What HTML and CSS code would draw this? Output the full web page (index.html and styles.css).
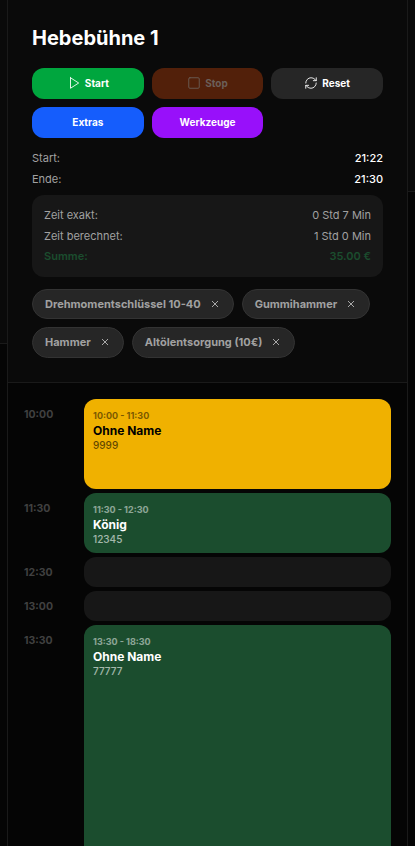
FILE: index.html
```html
<!DOCTYPE html>
<html lang="de">
<head>
  <meta charset="UTF-8">
  <title>Hebebühne 1</title>
  <link rel="stylesheet" href="styles.css">
</head>
<body>
  <!-- rows of the page behind the panel -->
  <div class="edge edge-left"></div>
  <div class="edge edge-right"></div>

  <div class="lift-panel">
    <section class="controls">
      <h1>Hebebühne 1</h1>

      <div class="btn-grid">
        <button class="btn btn-start">
          <svg class="btn-icon" viewBox="0 0 24 24"><polygon points="6 3 20 12 6 21 6 3" /></svg>
          Start
        </button>
        <button class="btn btn-stop">
          <svg class="btn-icon" viewBox="0 0 24 24"><rect x="3" y="3" width="18" height="18" rx="2" /></svg>
          Stop
        </button>
        <button class="btn btn-reset">
          <svg class="btn-icon" viewBox="0 0 24 24">
            <path d="M3 12a9 9 0 0 1 9-9 9.75 9.75 0 0 1 6.74 2.74L21 8" />
            <path d="M21 3v5h-5" />
            <path d="M21 12a9 9 0 0 1-9 9 9.75 9.75 0 0 1-6.74-2.74L3 16" />
            <path d="M8 16H3v5" />
          </svg>
          Reset
        </button>
        <button class="btn btn-extras">Extras</button>
        <button class="btn btn-tools">Werkzeuge</button>
      </div>

      <div class="time-row"><span>Start:</span><b>21:22</b></div>
      <div class="time-row"><span>Ende:</span><b>21:30</b></div>

      <div class="summary">
        <div class="summary-row"><span>Zeit exakt:</span><span>0 Std 7 Min</span></div>
        <div class="summary-row"><span>Zeit berechnet:</span><span>1 Std 0 Min</span></div>
        <div class="summary-row summary-total"><span>Summe:</span><span>35.00 €</span></div>
      </div>

      <div class="tags">
        <span class="tag">Drehmomentschlüssel 10-40 <svg class="tag-x" viewBox="0 0 24 24"><path d="M18 6 6 18M6 6l12 12" /></svg></span>
        <span class="tag">Gummihammer <svg class="tag-x" viewBox="0 0 24 24"><path d="M18 6 6 18M6 6l12 12" /></svg></span>
        <span class="tag">Hammer <svg class="tag-x" viewBox="0 0 24 24"><path d="M18 6 6 18M6 6l12 12" /></svg></span>
        <span class="tag">Altölentsorgung (10€) <svg class="tag-x" viewBox="0 0 24 24"><path d="M18 6 6 18M6 6l12 12" /></svg></span>
      </div>
    </section>

    <section class="schedule">
      <div class="slot">
        <div class="slot-time">10:00</div>
        <div class="booking booking-yellow h-90">
          <div class="booking-time">10:00 - 11:30</div>
          <div class="booking-name">Ohne Name</div>
          <div class="booking-no">9999</div>
        </div>
      </div>
      <div class="slot">
        <div class="slot-time">11:30</div>
        <div class="booking booking-green h-60">
          <div class="booking-time">11:30 - 12:30</div>
          <div class="booking-name">König</div>
          <div class="booking-no">12345</div>
        </div>
      </div>
      <div class="slot">
        <div class="slot-time">12:30</div>
        <div class="booking booking-free"></div>
      </div>
      <div class="slot">
        <div class="slot-time">13:00</div>
        <div class="booking booking-free"></div>
      </div>
      <div class="slot">
        <div class="slot-time">13:30</div>
        <div class="booking booking-green h-300">
          <div class="booking-time">13:30 - 18:30</div>
          <div class="booking-name">Ohne Name</div>
          <div class="booking-no">77777</div>
        </div>
      </div>
    </section>
  </div>
</body>
</html>
```

FILE: styles.css
```css
* {
  box-sizing: border-box;
}
html, body {
  height: 846px;
  overflow: hidden;
}
body {
  margin: 0;
  background: #0a0a0a;
  font-family: Inter, "Liberation Sans", sans-serif;
  color: #fff;
}
.edge {
  position: absolute;
  bottom: 0;
  width: 8px;
  background: #050505;
  border-top: 1px solid #1a1a1a;
}
.edge-left { left: 0; top: 343px; }
.edge-right { right: 0; top: 191px; }
.lift-panel {
  position: relative;
  width: 401px;
  height: 846px;
  margin-left: 7px;
  border-left: 1px solid #1a1a1a;
  border-right: 1px solid #1a1a1a;
  overflow: hidden;
}
.controls {
  height: 383px;
  padding: 24px 24px 0;
  background: #0a0a0a;
  border-bottom: 1px solid #1a1a1a;
}
h1 {
  margin: 0 0 16px;
  font-size: 20px;
  line-height: 28px;
  font-weight: 700;
}
.btn-grid {
  display: grid;
  grid-template-columns: repeat(3, 1fr);
  gap: 8px;
  margin-bottom: 10px;
}
.btn {
  display: flex;
  align-items: center;
  justify-content: center;
  gap: 4px;
  height: 31px;
  border: none;
  border-radius: 12px;
  padding: 0 0 1px;
  font-family: inherit;
  font-size: 10px;
  font-weight: 700;
  color: #fff;
}
.btn-icon {
  width: 14px;
  height: 14px;
  fill: none;
  stroke: currentColor;
  stroke-width: 1.5;
  stroke-linecap: round;
  stroke-linejoin: round;
}
.btn-start { background: #00a63e; }
.btn-stop { background: #52200a; color: #6b5f59; }
.btn-reset { background: #262626; }
.btn-extras { background: #155dfc; }
.btn-tools { background: #9810fa; }
.time-row {
  display: flex;
  justify-content: space-between;
  height: 21px;
  line-height: 21px;
  font-size: 11px;
  color: #a1a1a1;
}
.time-row b {
  font-weight: 500;
  color: #fff;
}
.summary {
  margin-top: 5px;
  height: 82px;
  padding: 10px 12px;
  background: #171717;
  border-radius: 12px;
  font-size: 11px;
  color: #a1a1a1;
}
.summary-row {
  display: flex;
  justify-content: space-between;
  height: 21px;
  line-height: 21px;
}
.summary-total {
  height: 20px;
  line-height: 19px;
  font-weight: 600;
  color: #1b4d2e;
}
.tags {
  display: flex;
  flex-wrap: wrap;
  gap: 8px;
  margin-top: 12px;
}
.tag {
  display: flex;
  align-items: center;
  gap: 8px;
  height: 30.25px;
  padding: 0 12px;
  background: #262626;
  border: 1px solid #333;
  border-radius: 16px;
  font-size: 11px;
  font-weight: 700;
  color: #a1a1a1;
}
.tag-x {
  width: 12px;
  height: 12px;
  fill: none;
  stroke: #d4d4d4;
  stroke-width: 1.5;
}
.schedule {
  height: 463px;
  padding: 16px 16px 0;
  background: #050505;
}
.slot {
  display: flex;
  margin-bottom: 4px;
}
.slot-time {
  width: 60px;
  padding-top: 9px;
  font-size: 10.5px;
  line-height: 14px;
  font-weight: 700;
  color: #404040;
}
.booking {
  flex: 1;
  height: 30px;
  padding: 9px 9px 0;
  border-radius: 12px;
}
.h-90 { height: 90px; }
.h-60 { height: 60px; }
.h-300 { height: 300px; flex-shrink: 0; }
.booking-free { background: #171717; }
.booking-yellow { background: #f0b100; color: #000; }
.booking-green { background: #1b4d2e; color: #fff; }
.booking-time {
  font-size: 9px;
  line-height: 15px;
  font-weight: 700;
  opacity: 0.5;
}
.booking-name {
  font-size: 12px;
  line-height: 16px;
  font-weight: 700;
}
.booking-no {
  font-size: 10px;
  line-height: 12px;
  font-weight: 500;
  opacity: 0.6;
}
```
